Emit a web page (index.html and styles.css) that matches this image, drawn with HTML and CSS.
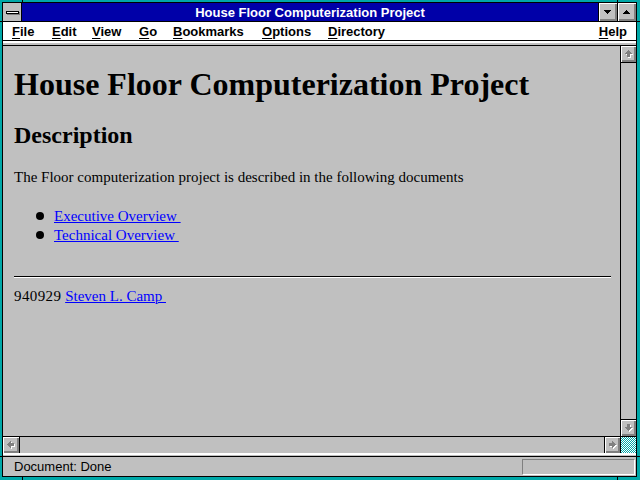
FILE: index.html
```html
<!DOCTYPE html>
<html>
<head>
<meta charset="utf-8">
<title>House Floor Computerization Project</title>
<link rel="stylesheet" href="styles.css">
</head>
<body>
<div class="window">
  <div class="titlebar">
    <div class="sysmenu"><div class="sysbar"></div></div>
    <div class="title">House Floor Computerization Project</div>
    <div class="tbtn"><svg width="7" height="4" viewBox="0 0 7 4"><path d="M0 0h7v1h-1v1h-1v1h-1v1h-1v-1h-1v-1h-1v-1h-1z" fill="#000"/></svg></div>
    <div class="tbtn"><svg width="7" height="4" viewBox="0 0 7 4"><path d="M0 0h7v1h-1v1h-1v1h-1v1h-1v-1h-1v-1h-1v-1h-1z" fill="#000" transform="rotate(180 3.5 2)"/></svg></div>
  </div>
  <div class="menubar">
    <span><u>F</u>ile</span>
    <span><u>E</u>dit</span>
    <span><u>V</u>iew</span>
    <span><u>G</u>o</span>
    <span><u>B</u>ookmarks</span>
    <span><u>O</u>ptions</span>
    <span><u>D</u>irectory</span>
    <span class="spacer"></span>
    <span><u>H</u>elp</span>
  </div>
  <div class="sep"></div>
  <div class="view">
    <div class="content">
      <h1>House Floor Computerization Project</h1>
      <h2>Description</h2>
      <p>The Floor computerization project is described in the following documents</p>
      <ul>
        <li><a href="#">Executive Overview&nbsp;</a></li>
        <li><a href="#">Technical Overview&nbsp;</a></li>
      </ul>
      <hr>
      <p class="sig"><span class="date">940929</span> <a href="#">Steven L. Camp&nbsp;</a></p>
    </div>
    <div class="vscroll">
      <div class="sbtn up"><svg width="15" height="16" viewBox="0 0 15 16"><path d="M7 4h1v1h1v1h1v1h1v1h-2v3h-3v-3h-2v-1h1v-1h1v-1h1z" fill="#fff" transform="translate(1 1)"/><path d="M7 4h1v1h1v1h1v1h1v1h-2v3h-3v-3h-2v-1h1v-1h1v-1h1z" fill="#808080"/></svg></div>
      <div class="track"></div>
      <div class="sbtn down"><svg width="15" height="16" viewBox="0 0 15 16"><path d="M7 4h1v1h1v1h1v1h1v1h-2v3h-3v-3h-2v-1h1v-1h1v-1h1z" fill="#fff" transform="translate(1 1) rotate(180 7.5 7.5)"/><path d="M7 4h1v1h1v1h1v1h1v1h-2v3h-3v-3h-2v-1h1v-1h1v-1h1z" fill="#808080" transform="rotate(180 7.5 7.5)"/></svg></div>
    </div>
    <div class="hscroll">
      <div class="sbtn left"><svg width="16" height="16" viewBox="0 0 16 16"><path d="M7 4h1v1h1v1h1v1h1v1h-2v3h-3v-3h-2v-1h1v-1h1v-1h1z" fill="#fff" transform="translate(1 1) rotate(-90 7.5 7.5)"/><path d="M7 4h1v1h1v1h1v1h1v1h-2v3h-3v-3h-2v-1h1v-1h1v-1h1z" fill="#808080" transform="rotate(-90 7.5 7.5)"/></svg></div>
      <div class="htrack"></div>
      <div class="sbtn right"><svg width="15" height="16" viewBox="0 0 15 16"><path d="M7 4h1v1h1v1h1v1h1v1h-2v3h-3v-3h-2v-1h1v-1h1v-1h1z" fill="#fff" transform="translate(1 1) rotate(90 7.5 7.5)"/><path d="M7 4h1v1h1v1h1v1h1v1h-2v3h-3v-3h-2v-1h1v-1h1v-1h1z" fill="#808080" transform="rotate(90 7.5 7.5)"/></svg></div>
    </div>
    <div class="corner"></div>
  </div>
  <div class="statussep"></div>
  <div class="status">
    <span class="stext">Document: Done</span>
    <span class="sbox"></span>
  </div>
</div>
<div class="notch nt1"></div>
<div class="notch nt2"></div>
<div class="notch nb1"></div>
<div class="notch nb2"></div>
<div class="notch nl1"></div>
<div class="notch nl2"></div>
<div class="notch nr1"></div>
<div class="notch nr2"></div>
</body>
</html>
```
FILE: styles.css
```css
html, body {
  margin: 0;
  padding: 0;
  background: #00a8a8;
  width: 640px;
  height: 480px;
  overflow: hidden;
}
body { position: relative; }

.window {
  margin: 2px 3px 3px 2px;
  border: 1px solid #000;
  width: 633px;
  height: 473px;
  display: flex;
  flex-direction: column;
  background: #c0c0c0;
  font-family: "Liberation Sans", Arial, sans-serif;
}

/* title bar */
.titlebar {
  display: flex;
  height: 18px;
  border-bottom: 1px solid #000;
  background: #0000a8;
}
.sysmenu {
  width: 18px;
  border-right: 1px solid #000;
  background: #c0c0c0;
  display: flex;
  align-items: center;
  justify-content: center;
}
.sysbar {
  width: 11px;
  height: 1px;
  background: #fff;
  border: 1px solid #000;
  box-shadow: 1px 1px 0 #808080;
  margin-top: 1px;
}
.title {
  flex: 1;
  color: #fff;
  font-weight: bold;
  font-size: 13px;
  line-height: 16px;
  padding-top: 2px;
  text-align: center;
  white-space: nowrap;
}
.tbtn {
  width: 18px;
  border-left: 1px solid #000;
  background: #c0c0c0;
  box-shadow: inset 1px 1px 0 #fff, inset -1px -1px 0 #808080, inset -2px -2px 0 #808080;
  display: flex;
  align-items: center;
  justify-content: center;
}
.tbtn svg { display: block; shape-rendering: crispEdges; margin: -1px 0 0 -1px; }

/* menu */
.menubar {
  display: grid;
  grid-template-columns: 40px 40px 47px 34px 89px 66px auto 1fr auto;
  height: 17px;
  line-height: 17px;
  padding: 1px 9px 0 9px;
  border-bottom: 1px solid #000;
  background: #fff;
  color: #000;
  font-weight: bold;
  font-size: 13px;
  white-space: nowrap;
}
.menubar u { text-decoration-thickness: 1px; text-underline-offset: 2px; }

.sep {
  border-top: 2px solid #fff;
  height: 2px;
  background: #c0c0c0;
  border-bottom: 1px solid #000;
}

/* viewport */
.view {
  flex: 1;
  display: grid;
  grid-template-columns: 1fr 16px;
  grid-template-rows: 1fr 17px;
  min-height: 0;
}
.content {
  background: #c0c0c0;
  padding: 19px 9px 0 11px;
  font-family: "Liberation Serif", "Times New Roman", serif;
  color: #000;
  overflow: hidden;
}
.content h1 {
  margin: 0;
  font-size: 32px;
  line-height: 38px;
  font-weight: bold;
}
.content h2 {
  margin: 18px 0 0 0;
  font-size: 24px;
  line-height: 28px;
  font-weight: bold;
}
.content p {
  margin: 19px 0 0 0;
  font-size: 15px;
  line-height: 19px;
  white-space: nowrap;
}
.content ul {
  list-style: none;
  margin: 20px 0 0 0;
  padding: 0 0 0 22px;
  font-size: 15px;
  line-height: 19px;
}
.content li {
  display: flex;
}
.content li::before {
  content: "";
  width: 8px;
  height: 8px;
  border-radius: 50%;
  background: #000;
  margin: 5px 10px 0 0;
  flex: none;
}
.content a {
  color: #0000ff;
  text-decoration: underline;
  text-decoration-thickness: 1px;
}
.content hr {
  margin: 31px 0 0 0;
  height: 0;
  border: 0;
  border-top: 1px solid #000;
  border-bottom: 1px solid #fff;
}
.content p.sig { margin-top: 9px; }
.date { letter-spacing: 0.4px; }

.vscroll {
  border-left: 1px solid #000;
  display: flex;
  flex-direction: column;
  background: #c0c0c0;
}
.track { flex: 1; }
.sbtn {
  background: #c0c0c0;
  box-shadow: inset 1px 1px 0 #fff, inset -1px -1px 0 #808080, inset -2px -2px 0 #808080;
  flex: none;
}
.sbtn svg { display: block; shape-rendering: crispEdges; }
.up { height: 16px; border-bottom: 1px solid #000; }
.down { height: 16px; border-top: 1px solid #000; }

.hscroll {
  border-top: 1px solid #000;
  display: flex;
  background: #c0c0c0;
}
.htrack { flex: 1; }
.left { width: 16px; border-right: 1px solid #000; }
.right { width: 15px; border-left: 1px solid #000; }

.corner {
  border-top: 1px solid #000;
  border-left: 1px solid #000;
  background: repeating-conic-gradient(#00a8a8 0 25%, #ffffff 0 50%) 0 0 / 2px 2px;
}

.statussep {
  border-top: 2px solid #fff;
  height: 1px;
  background: #c0c0c0;
  border-bottom: 1px solid #000;
}
.status {
  height: 19px;
  display: flex;
  align-items: flex-start;
  justify-content: space-between;
  padding: 0 1px 0 11px;
  font-size: 13px;
  line-height: 19px;
  color: #000;
}
.sbox {
  width: 111px;
  height: 14px;
  margin-top: 2px;
  border-top: 1px solid #808080;
  border-left: 1px solid #808080;
  border-bottom: 1px solid #fff;
  border-right: 1px solid #fff;
}

/* frame corner notches */
.notch { position: absolute; background: #000; }
.nt1 { left: 22px; top: 0; width: 1px; height: 2px; }
.nt2 { left: 617px; top: 0; width: 1px; height: 2px; }
.nb1 { left: 22px; top: 477px; width: 1px; height: 3px; }
.nb2 { left: 617px; top: 477px; width: 1px; height: 3px; }
.nl1 { left: 0; top: 21px; width: 2px; height: 1px; }
.nl2 { left: 0; top: 456px; width: 2px; height: 1px; }
.nr1 { left: 637px; top: 21px; width: 3px; height: 1px; }
.nr2 { left: 637px; top: 456px; width: 3px; height: 1px; }
```
